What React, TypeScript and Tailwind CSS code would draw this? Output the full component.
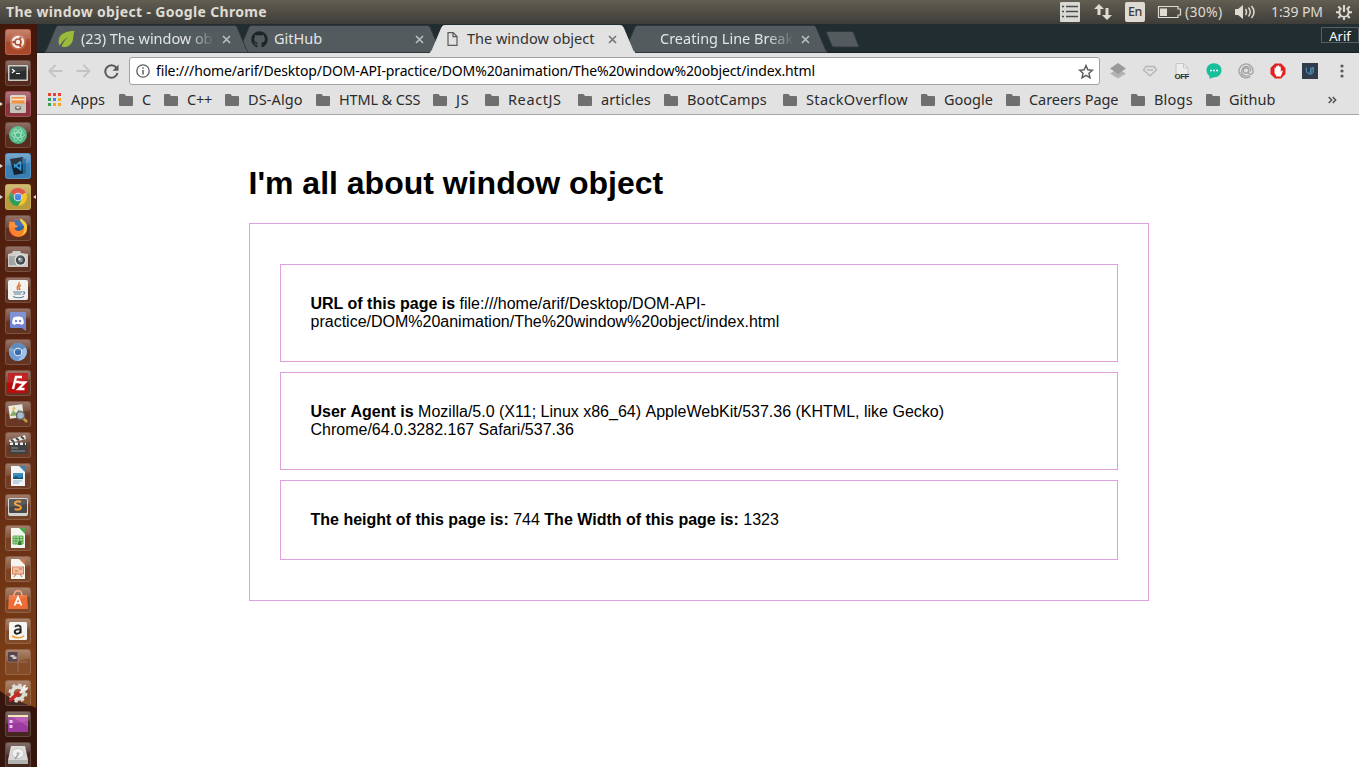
import React from "react";
import { FaGithub } from "react-icons/fa";

const tile = "relative h-[26px] w-[26px] shrink-0 rounded-[3px] overflow-hidden border border-white/15";

type LauncherItem = { bg: string; art: React.ReactNode; running?: boolean; focused?: boolean };

const glass = "bg-white/8";

const launcher: LauncherItem[] = [
  {
    bg: "bg-[#a8482a]",
    art: (
      <>
        <circle cx="13" cy="13" r="8" fill="#d0795a" opacity=".6" />
        <circle cx="13" cy="13" r="6.2" fill="#f4ece8" />
        <circle cx="13" cy="13" r="3" fill="none" stroke="#a8482a" strokeWidth="1.6" />
        <circle cx="8.4" cy="13" r="1.2" fill="#a8482a" />
        <circle cx="15.4" cy="9" r="1.2" fill="#a8482a" />
        <circle cx="15.4" cy="17" r="1.2" fill="#a8482a" />
      </>
    ),
  },
  {
    bg: glass,
    art: (
      <>
        <rect x="3" y="5" width="20" height="16" rx="1" fill="#c9c9c6" />
        <rect x="4.5" y="6.5" width="17" height="13" fill="#2a2e2e" />
        <path d="M7 9l2.5 2L7 13M11 13.5h4" stroke="#fff" strokeWidth="1.2" fill="none" />
      </>
    ),
  },
  {
    bg: "bg-[#8c3340]",
    running: true,
    art: (
      <>
        <rect x="5" y="4" width="16" height="9" rx="1.5" fill="#d9d5ce" />
        <rect x="6.500" y="6" width="13" height="8" fill="#f08a35" />
        <path d="M6.500 8.500h13" stroke="#fbe3c3" strokeWidth="1.500" />
        <rect x="5" y="12.500" width="16" height="9.500" rx="1" fill="#c7c3bb" />
        <ellipse cx="13" cy="17" rx="3.200" ry="2.200" fill="#77736c" />
        <ellipse cx="13" cy="16.600" rx="1.800" ry="1" fill="#e5e2dc" />
      </>
    ),
  },
  {
    bg: glass,
    art: (
      <>
        <circle cx="13" cy="13" r="9" fill="#4fb985" />
        <g fill="none" stroke="#a5e3c5" strokeWidth=".8">
          <ellipse cx="13" cy="13" rx="6.500" ry="2.500" />
          <ellipse cx="13" cy="13" rx="6.500" ry="2.500" transform="rotate(60 13 13)" />
          <ellipse cx="13" cy="13" rx="6.500" ry="2.500" transform="rotate(120 13 13)" />
        </g>
      </>
    ),
  },
  {
    bg: "bg-[#3a80b5]",
    running: true,
    art: (
      <>
        <path d="M5 6l13-2 3 16-12 2z" fill="#15212c" />
        <path d="M17 5l4 1v14l-3 1z" fill="#24679b" />
        <path d="M15.500 8.500v8l-6.500-5M15.500 8.500l-6.500 6" stroke="#2f9be0" strokeWidth="1.700" fill="none" />
      </>
    ),
  },
  {
    bg: "bg-[#b99b3b]",
    running: true,
    focused: true,
    art: (
      <>
        <circle cx="13" cy="13" r="9" fill="#f2c52e" />
        <path d="M13 13L5.200 8.500A9 9 0 0 1 20.800 8.500z" fill="#dc4437" />
        <path d="M13 13L5.200 8.500A9 9 0 0 0 13 22l4-7z" fill="#2c9f5c" />
        <circle cx="13" cy="13" r="4.300" fill="#f4f4f4" />
        <circle cx="13" cy="13" r="3.400" fill="#4a86e8" />
      </>
    ),
  },
  {
    bg: glass,
    art: (
      <>
        <circle cx="13" cy="13" r="9" fill="#f5642a" />
        <circle cx="12.500" cy="11.500" r="7" fill="#2f62a8" />
        <path d="M5 6c-2 4-1.500 10 2 13 4 4 11 3.500 14-1 2-4 1-9-1-11 .5 4-1 7-4 8.500-3 1.200-6 0-6.500-2.500 2 0 3.500-1 3.500-2.200-3-.2-3.500-2.300-3-3.800C8 7 6 7.500 5 6z" fill="#f9852a" />
        <path d="M15 3.500c5 2 8.500 6.500 6.500 12-1 2.500-3 4.500-5 5.500 3-4 3.500-7 2-10.500-1-2.500-4-4-3.500-7z" fill="#fcc92f" />
        <path d="M5 6c-2 6-.5 12 5 15.500C5 21 2.500 14 5 6z" fill="#e7334a" />
      </>
    ),
  },
  {
    bg: glass,
    art: (
      <>
        <path d="M3 8l4-1 1-2h7l1 2 7 1v13H3z" fill="#c9c9c7" />
        <rect x="4" y="10" width="7" height="9" fill="#a3a3a0" />
        <circle cx="15.500" cy="14" r="6" fill="#e1e1df" />
        <circle cx="15.500" cy="14" r="4.700" fill="#44494c" />
        <circle cx="15.500" cy="14" r="2.400" fill="#8a9499" />
        <circle cx="14.500" cy="13" r="1" fill="#fff" />
      </>
    ),
  },
  {
    bg: glass,
    art: (
      <>
        <rect x="3" y="3" width="20" height="20" rx="2" fill="#f1f1f0" />
        <path d="M14 5c2 3-4 4-1 8M16 8c-3 2-2 3-1 5" stroke="#e0702f" strokeWidth="1.600" fill="none" />
        <path d="M8 15h9M9 17h7M8 19.500c3 1.400 8 1.400 11 0M17.500 15c3-1 3 2 0 2.500" stroke="#597f9c" strokeWidth="1.100" fill="none" />
      </>
    ),
  },
  {
    bg: glass,
    art: (
      <>
        <path d="M6 4h14q1 0 1 1v18l-4-3H6q-1 0-1-1V5q0-1 1-1z" fill="#7285d2" />
        <path d="M8.500 9.500q4.500-2 9 0 1.500 3 1.300 6-1.500 1.300-3 1.200l-.8-1q-2 .5-4 0l-.8 1q-1.500.1-3-1.200-.2-3 1.300-6z" fill="#fff" />
        <circle cx="11" cy="13" r="1.200" fill="#7285d2" />
        <circle cx="15" cy="13" r="1.200" fill="#7285d2" />
      </>
    ),
  },
  {
    bg: glass,
    art: (
      <>
        <circle cx="13" cy="13" r="9" fill="#9cc1ea" />
        <path d="M13 13L5.200 8.500A9 9 0 0 1 20.800 8.500z" fill="#4f7fb4" />
        <path d="M13 13L5.200 8.500A9 9 0 0 0 13 22l4-7z" fill="#6b9bd0" />
        <circle cx="13" cy="13" r="4.200" fill="#e6f0fa" />
        <circle cx="13" cy="13" r="3.200" fill="#386ca8" />
      </>
    ),
  },
  {
    bg: glass,
    art: (
      <>
        <rect x="3" y="3" width="20" height="20" fill="#b90d0d" />
        <path d="M8 19l3-12h6M9.500 12h5M14 12.500h6l-6.500 6.500h6" stroke="#fff" strokeWidth="2.400" fill="none" />
      </>
    ),
  },
  {
    bg: glass,
    art: (
      <>
        <rect x="4" y="4" width="14" height="13" fill="#e8e8df" transform="rotate(-7 11 10)" />
        <path d="M5 15l3-6 3 3 3-4 3 6z" fill="#82a85b" />
        <circle cx="9" cy="7.500" r="1.500" fill="#e5b64b" />
        <path d="M18 17l4 4" stroke="#c39a3d" strokeWidth="2.500" />
        <circle cx="15.500" cy="14.500" r="4" fill="#a9bccb" stroke="#5b6369" strokeWidth="1.400" />
      </>
    ),
  },
  {
    bg: glass,
    art: (
      <>
        <path d="M4 8l16-5 1 4-16 4z" fill="#ecebea" />
        <path d="M6 7.500l3 2.500M11 6l3 2.500M16 4.500l3 2.500" stroke="#333" strokeWidth="2" />
        <rect x="4" y="10" width="18" height="12" rx="1" fill="#3f4142" />
        <path d="M5 11.800h16" stroke="#ecebea" strokeWidth="2.500" strokeDasharray="3 2" />
        <path d="M6 16h7M6 19h14" stroke="#9a9c9d" strokeWidth=".9" />
      </>
    ),
  },
  {
    bg: glass,
    art: (
      <>
        <path d="M6 3h9l5 5v15H6z" fill="#f0f4f5" />
        <path d="M14 3h6v6z" fill="#2d74a8" />
        <rect x="8" y="10" width="10" height="6" fill="#2f84b8" />
        <path d="M8 15l3-2 3 2 4-1v2H8z" fill="#195078" />
        <path d="M8 18h9M8 20h6" stroke="#8cb2ca" />
      </>
    ),
  },
  {
    bg: glass,
    art: (
      <>
        <rect x="3" y="4" width="20" height="18" rx="2" fill="#d2d2d0" />
        <rect x="4" y="5" width="18" height="14" rx="1" fill="#484848" />
        <path d="M16 8c-2-1-6-1-6 1.500 0 2.300 6 1.500 6 4 0 2.300-4 2.500-6.300 1.300" stroke="#f79a2e" strokeWidth="2" fill="none" />
      </>
    ),
  },
  {
    bg: glass,
    art: (
      <>
        <path d="M6 3h9l5 5v15H6z" fill="#f2f5ef" />
        <path d="M14 3h6v6z" fill="#36a136" />
        <path d="M8 11h10v8H8zM8 13.500h10M8 16h10M11 11v8M14.500 11v8" fill="#a8d99b" stroke="#49a343" strokeWidth=".9" />
        <path d="M13 20v-3h1.500v-1h2v4z" fill="#35782f" />
      </>
    ),
  },
  {
    bg: glass,
    art: (
      <>
        <path d="M6 3h9l5 5v15H6z" fill="#f7f3ef" />
        <path d="M14 3h6v6z" fill="#bd6a43" />
        <rect x="7.500" y="11" width="11" height="7" fill="#f3c2a4" stroke="#d07f57" />
        <path d="M11 18l-2 3M15 18l2 3M10 15h3M14 13h3" stroke="#c36942" />
      </>
    ),
  },
  {
    bg: glass,
    art: (
      <>
        <path d="M4 8h18l1 14H3z" fill="#ee6d35" />
        <path d="M9 9c0-7 8-7 8 0" stroke="#f7a27a" strokeWidth="1.500" fill="none" />
        <path d="M9.500 18.500L13 10l3.500 8.500M10.500 16h5" stroke="#fff" strokeWidth="1.700" fill="none" />
      </>
    ),
  },
  {
    bg: glass,
    art: (
      <>
        <rect x="4" y="4" width="18" height="18" rx="1.500" fill="#f5f5f4" />
        <path d="M10 8.800c2-2.200 5.600-1.500 5.600 1v5.500M15.500 11.500c-3-.4-5.800.2-5.800 2.300 0 2.500 4.600 2.600 5.800-.3" stroke="#171717" strokeWidth="1.900" fill="none" />
        <path d="M7 18c4 2.500 9 2.500 12-.3" stroke="#f49b28" strokeWidth="1.500" fill="none" />
      </>
    ),
  },
  {
    bg: glass,
    art: (
      <>
        <rect x="3" y="3" width="10" height="10" fill="#453037" />
        <path d="M13 3v20M3 13h20" stroke="#9c7a68" strokeWidth=".8" />
        <path d="M5.500 6h4v1.500h2V10h-4V8h-2z" fill="#c8c3c5" />
      </>
    ),
  },
  {
    bg: glass,
    art: (
      <>
        <circle cx="13" cy="13" r="6" fill="none" stroke="#dcdcd9" strokeWidth="3.500" />
        <circle cx="13" cy="13" r="8.500" fill="none" stroke="#dcdcd9" strokeWidth="2" strokeDasharray="3.500 3.200" />
        <path d="M5.500 20l9-8" stroke="#ce2626" strokeWidth="3.500" strokeLinecap="round" />
        <path d="M14 12l4-3c-1-3 1-5 3-4l-1 3 3-1c0 3-2 4-4 3l-3 4z" fill="#f1f1f0" />
      </>
    ),
  },
  {
    bg: glass,
    art: (
      <>
        <rect x="3" y="4" width="20" height="17" fill="#9b3a9f" />
        <path d="M8 6h15v10z" fill="#c35cc2" opacity=".6" />
        <rect x="3" y="4" width="20" height="2" fill="#f1e7b6" />
        <rect x="4.500" y="9" width="3" height="3" fill="#e6c4e7" />
        <rect x="4.500" y="14" width="3" height="3" fill="#e6c4e7" />
      </>
    ),
  },
  {
    bg: glass,
    art: (
      <>
        <path d="M6 4h14l3 14v4H3v-4z" fill="#d7d7d5" />
        <path d="M3 18h20v4H3z" fill="#b2b3b1" />
        <ellipse cx="13" cy="11.500" rx="6" ry="5" fill="#efefee" stroke="#bfc0bf" />
        <circle cx="13" cy="11.500" r="1.600" fill="#b2b4b3" />
        <path d="M10 17l3-4" stroke="#9c9e9d" strokeWidth="1.300" />
      </>
    ),
  },
];

function Launcher() {
  return (
    <aside className="relative flex w-[37px] shrink-0 flex-col gap-[5px] overflow-hidden border-r border-[#3d160b] bg-linear-to-b from-[#43180b] via-[#5a2410] via-50% to-[#854618] pl-[5px] pt-[5px]">
      <svg className="absolute bottom-0 left-0" width="37" height="80" viewBox="0 0 37 80">
        <path d="M0 4L12 12L37 21V80H0z" fill="#36150e" />
      </svg>
      {launcher.map((item, i) => (
        <div key={i} className="relative h-[26px] shrink-0">
          {item.running && (
            <span className="absolute -left-[5px] top-[11px] h-0 w-0 border-y-2 border-l-[3px] border-y-transparent border-l-[#ded5d0]" />
          )}
          {item.focused && (
            <span className="absolute right-0 top-[11px] h-0 w-0 border-y-2 border-r-[3px] border-y-transparent border-r-[#ded5d0]" />
          )}
          <div className={`${tile} ${item.bg}`}>
            <div className="absolute inset-0 bg-linear-to-b from-white/25 to-transparent to-50%" />
            <svg className="absolute -left-px -top-px" width="26" height="26" viewBox="0 0 26 26">
              {item.art}
              <path d="M0 0h26v9Q13 13 0 13z" fill="#fff" opacity=".1" />
            </svg>
          </div>
        </div>
      ))}
    </aside>
  );
}

function MenuBar() {
  return (
    <header className="flex h-6 shrink-0 items-center bg-linear-to-b from-[#625e52] to-[#3e3d39] pl-[6px] pr-[7px] font-['Noto_Sans',sans-serif] text-[14px] text-[#dfdbd2]">
      <h2 className="flex-1 whitespace-nowrap pb-[2px] text-[14px] font-bold tracking-[0.33px]">The window object - Google Chrome</h2>
      <svg width="20" height="20" viewBox="0 0 20 20" className="mr-[14px]">
        <rect width="20" height="20" rx="1" fill="#d8d8d5" />
        <path d="M2 4.500h2M6 4.500h12M2 9.500h2M6 9.500h12M2 14.500h2M6 14.500h12" stroke="#4b4b49" strokeWidth="1.500" />
      </svg>
      <svg width="18" height="16" viewBox="0 0 18 16" className="mr-[13px]" fill="#dfdbd2">
        <path d="M5 0l5 5H6.500v6h-3V5H0zM13 16l-5-5h3.500V4h3v7H18z" />
      </svg>
      <span className="mr-[12px] flex h-5 w-5 items-center justify-center rounded-[2px] bg-[#dfdbd2] text-[12.500px] font-medium tracking-[-0.3px] text-[#3f3d38]">En</span>
      <svg width="25" height="14" viewBox="0 0 25 14" className="mr-[3px]">
        <path d="M1.500 1.500h19.500v2.500h2.500v6h-2.500v2.500H1.500z" fill="none" stroke="#dfdbd2" strokeWidth="1.200" />
        <rect x="3" y="3.500" width="7" height="7.500" fill="#dfdbd2" />
      </svg>
      <span className="w-[50px] whitespace-nowrap pb-[2px] tracking-[0.3px]">(30%)</span>
      <svg width="21" height="16" viewBox="0 0 21 16" className="mr-[15px]">
        <path d="M0 5h3l5-4v14l-5-4H0z" fill="#dfdbd2" />
        <path d="M10.500 5q2 3 0 6M13.500 3.500q3.500 4.500 0 9M16.500 2q5 6 0 12" fill="none" stroke="#dfdbd2" strokeWidth="1.500" />
      </svg>
      <span className="w-[65px] whitespace-nowrap pb-[2px] text-[14px] tracking-[-0.1px]">1:39 PM</span>
      <svg width="16" height="16" viewBox="0 0 16 16" fill="none" stroke="#dfdbd2">
        <path d="M5.500 4.200a4.700 4.700 0 1 0 5 0" strokeWidth="1.900" />
        <path d="M8 1v7" strokeWidth="2" />
        <path d="M0 8.300h3M13 8.300h3M2.300 14l2-2M13.700 14l-2-2M8 13.500V16M2.300 2.500l2 2M13.700 2.500l-2 2" strokeWidth="2" />
      </svg>
    </header>
  );
}

type TabProps = { title: string; icon: React.ReactNode; active?: boolean; layer: string; fade?: string };

function Tab({ title, icon, active, layer, fade = "" }: TabProps) {
  return (
    <div className={`relative h-7 w-[193px] shrink-0 ${layer}`}>
      <svg className="absolute left-0 top-0" width="205" height="28" viewBox="0 0 205 28">
        <path
          d="M0 27.500Q1.500 27 2.500 24.500L11.800 2.500Q12.700.5 14.500 .5H190.500Q192.300.5 193.200 2.500L202.500 24.500Q203.500 27 205 27.500z"
          fill={active ? "#e2e2e2" : "#545b5f"}
          stroke={active ? "#e2e2e2" : "#30373b"}
        />
      </svg>
      <div className="relative flex h-7 items-center pl-[14px]">
        <span className="flex w-[23px] shrink-0 items-center">{icon}</span>
        <span
          className={`w-[134px] whitespace-nowrap pb-[2px] font-['Noto_Sans',sans-serif] text-[14.500px] leading-[26px] ${
            active ? "text-[#333]" : "text-[#e3e4e5]"
          } ${fade}`}
        >
          {title}
        </span>
        <svg width="9" height="9" viewBox="0 0 9 9" className="ml-[7px]">
          <path d="M1 1l7 7M8 1l-7 7" stroke={active ? "#777" : "#b9bcbe"} strokeWidth="1.700" />
        </svg>
      </div>
    </div>
  );
}

function TabStrip() {
  return (
    <div className="flex h-[29px] shrink-0 border-b border-[#171d21] bg-[#222d32] pl-[7px] pt-px">
      <Tab
        layer="z-10"
        fade="mask-r-from-80% mask-r-to-100% tracking-[-0.05px]"
        title="(23) The window ob"
        icon={
          <svg width="17" height="18" viewBox="0 0 17 18">
            <path d="M16.500 1C10 .8 2 3 .8 9.500c-.5 3 .2 4.800 1 6C3 14 5 10 10 7 7 10 5 13 3.500 16.500 9 18.500 14 15 15 9.500 15.500 6.500 15.500 3.500 16.500 1z" fill="#9aba39" />
          </svg>
        }
      />
      <Tab layer="z-0" title="GitHub" icon={<FaGithub size={17} color="#1f2427" />} />
      <Tab
        layer="z-20"
        active
        title="The window object"
        icon={
          <svg width="16" height="14" viewBox="0 0 16 14" fill="none" stroke="#5b5b5b" strokeWidth="1.200">
            <path d="M4 .7h5.200L13 4.500v8.800H4zM9 .7v4h4" />
          </svg>
        }
      />
      <Tab layer="z-0" fade="mask-r-from-80% mask-r-to-100%" title="Creating Line Break" icon={null} />
      <svg width="34" height="17" viewBox="0 0 34 17" className="ml-[9px] mt-[6px]">
        <path d="M2.500.5H26.500q1.500 0 2.200 1.500l4.800 12.500q.5 1.500-1 1.500H9q-1.500 0-2.200-1.500L1.500 2Q1 .5 2.500 .5z" fill="#545b5f" stroke="#30373b" />
      </svg>
      <div className="flex-1" />
      <div className="mt-[2px] flex h-[16px] w-[38px] items-center justify-center border border-[#566066] pt-px font-['Noto_Sans',sans-serif] text-[13px] leading-[14px] text-white">Arif</div>
    </div>
  );
}

function Toolbar() {
  return (
    <div className="relative flex h-9 shrink-0 items-center bg-[#e2e2e2] pl-[11px] pr-[10px]">
      <svg width="15" height="14" viewBox="0 0 15 14" fill="none" stroke="#c4c4c4" strokeWidth="1.900">
        <path d="M14.500 7H1.500M7.500 1L1.500 7l6 6" />
      </svg>
      <svg width="15" height="14" viewBox="0 0 15 14" fill="none" stroke="#c4c4c4" strokeWidth="1.900" className="ml-[13px]">
        <path d="M.5 7h13M7.500 1l6 6-6 6" />
      </svg>
      <svg width="15" height="15" viewBox="0 0 15 15" className="ml-[13px]">
        <path d="M12.300 3.600A6.200 6.200 0 1 0 13.500 9" fill="none" stroke="#595959" strokeWidth="2" />
        <path d="M14.500.5v6.200H8.500z" fill="#595959" />
      </svg>
      <div className="ml-[10px] flex h-7 w-[971px] items-center rounded-[3px] border border-[#a2a2a2] bg-white pl-[6px] pr-[5px]">
        <svg width="14" height="14" viewBox="0 0 14 14" fill="none" stroke="#5c5c5c">
          <circle cx="7" cy="7" r="6.200" strokeWidth="1.300" />
          <path d="M7 6v4.500M7 3.200v1.600" strokeWidth="1.500" />
        </svg>
        <span className="ml-[6px] flex-1 whitespace-nowrap pb-px font-['Noto_Sans',sans-serif] text-[14px] tracking-[-0.14px] text-black">
          file:///home/arif/Desktop/DOM-API-practice/DOM%20animation/The%20window%20object/index.html
        </span>
        <svg width="16" height="15" viewBox="0 0 16 15" fill="none" stroke="#5a5a5a" strokeWidth="1.400">
          <path d="M8 1.500l1.800 4.300 4.700.4-3.600 3 1.100 4.600L8 11.300l-4 2.500 1.100-4.600-3.600-3 4.700-.4z" />
        </svg>
      </div>
      <div className="ml-[10px] flex items-center gap-4">
        <svg width="16" height="16" viewBox="0 0 16 16">
          <path d="M8 6l8 4.500L8 15.500 0 10.500z" fill="#b3b3b3" />
          <path d="M8 0l8 5.500L8 11 0 5.500z" fill="#999" />
        </svg>
        <svg width="16" height="16" viewBox="0 0 16 16" fill="none" stroke="#b5b5b5" strokeWidth="1.300">
          <path d="M4 3.500h8l2.500 3.500L8 12.800 1.500 7zM5 7h6" />
        </svg>
        <svg width="16" height="16" viewBox="0 0 16 16">
          <path d="M2 .5h7.500L14 5v9H2z" fill="#ececec" stroke="#c6c6c6" />
          <path d="M9.500.5V5H14" fill="none" stroke="#c6c6c6" />
          <text x="8" y="15.500" textAnchor="middle" fontFamily="Liberation Sans, sans-serif" fontWeight="700" fontSize="8" textLength="15" fill="#2f2f2f">OFF</text>
        </svg>
        <svg width="16" height="16" viewBox="0 0 16 16">
          <path d="M8 .3c4.500 0 7.500 3 7.500 7s-3 7-7 7c-2 0-3 1.400-5.500 1.200.8-.8.700-2 .2-2.700C1.300 11.300.5 9.500.5 7.300.5 3.300 3.500.3 8 .3z" fill="#18bf9b" />
          <path d="M4 7.500h2M7 7.500h2M10 7.500h2" stroke="#fff" strokeWidth="1.600" />
        </svg>
        <svg width="16" height="16" viewBox="0 0 16 16" fill="none" stroke="#a2a2a2" strokeWidth="1.300">
          <path d="M12.500 13.300A7 7 0 1 1 15 8.500c0 2-1.500 3-3 2.800-1.500-.3-1.600-1.500-1.600-3.300" />
          <circle cx="8" cy="7.500" r="2.700" />
          <path d="M4.500 12.500C2.500 9 4 3.500 8.500 3.500c3 0 4.500 2 4 5M3 9c1 3.500 5 5 8.500 3.500" />
        </svg>
        <svg width="16" height="16" viewBox="0 0 16 16">
          <path d="M5 .5h6L15.500 5v6L11 15.500H5L.5 11V5z" fill="#e3201f" />
          <path d="M4.500 10V5q.7-.9 1.500 0V3.500q.8-.9 1.600 0V2.800q.8-.9 1.600 0v1q.9-.8 1.600.2V9l1-1.500q1.200-.2.900.9L10.800 13.500H6.500z" fill="#fff" />
        </svg>
        <svg width="16" height="16" viewBox="0 0 16 16">
          <rect width="16" height="16" fill="#303c4b" />
          <path d="M4.300 4.500V8a2.200 2.200 0 0 0 4.400 0V4.500M6.500 11c3.500 1 5-1 5-3.500v-3M11.500 4.500H10V8c0 1.500-.8 2.500-2 3" fill="none" stroke="#4f93be" strokeWidth="1" />
        </svg>
        <svg width="4" height="14" viewBox="0 0 4 14" fill="#5a5a5a" className="ml-[6px]">
          <circle cx="2" cy="2" r="1.600" />
          <circle cx="2" cy="7" r="1.600" />
          <circle cx="2" cy="12" r="1.600" />
        </svg>
      </div>
    </div>
  );
}

const folders = [
  { label: "C", width: "w-[45px]" },
  { label: "C++", width: "w-[61px] tracking-[-0.2px]" },
  { label: "DS-Algo", width: "w-[91px] tracking-[0.1px]" },
  { label: "HTML & CSS", width: "w-[117px] tracking-[-0.15px]" },
  { label: "JS", width: "w-[52px] tracking-[0.8px]" },
  { label: "ReactJS", width: "w-[93px] tracking-[0.6px]" },
  { label: "articles", width: "w-[86px] tracking-[0.1px]" },
  { label: "BootCamps", width: "w-[119px] tracking-[0.1px]" },
  { label: "StackOverflow", width: "w-[138px] tracking-[0.35px]" },
  { label: "Google", width: "w-[85px]" },
  { label: "Careers Page", width: "w-[125px] tracking-[-0.05px]" },
  { label: "Blogs", width: "w-[75px] tracking-[0.2px]" },
  { label: "Github", width: "w-[122px]" },
];

const appDots = ["bg-[#ea4335]", "bg-[#ea4335]", "bg-[#ea4335]", "bg-[#34a05c]", "bg-[#4285f4]", "bg-[#f5a623]", "bg-[#34a05c]", "bg-[#f5a623]", "bg-[#f5a623]"];

function BookmarksBar() {
  return (
    <nav className="flex h-[26px] shrink-0 items-center border-b border-[#a5a5a5] bg-[#e2e2e2] pb-[4px] pl-[11px] font-['Noto_Sans',sans-serif] text-[14.500px] leading-[18px] text-[#2c2c2c]">
      <div className="flex w-[71px] shrink-0 items-center gap-[10px]">
        <div className="grid grid-cols-3 gap-[2px]">
          {appDots.map((color, i) => (
            <span key={i} className={`h-[3px] w-[3px] ${color}`} />
          ))}
        </div>
        <span className="pb-[2px]">Apps</span>
      </div>
      {folders.map(({ label, width }) => (
        <div key={label} className={`flex shrink-0 items-center gap-[9px] ${width}`}>
          <svg width="14" height="12" viewBox="0 0 14 12" className="shrink-0">
            <path d="M1 0h4.500L7 2h6q1 0 1 1v8q0 1-1 1H1q-1 0-1-1V1q0-1 1-1z" fill="#6f6f6f" />
          </svg>
          <span className="whitespace-nowrap pb-[2px]">{label}</span>
        </div>
      ))}
      <svg width="9" height="8" viewBox="0 0 9 8" fill="none" stroke="#4b4b4b" strokeWidth="1.400" className="shrink-0">
        <path d="M.7 1l3 3-3 3M4.700 1l3 3-3 3" />
      </svg>
    </nav>
  );
}

const card = "border border-[#dda0dd] p-[30px]";

function PageContent() {
  return (
    <main className="flex-1 bg-white pl-[211.5px] pt-[50px] font-['Liberation_Sans',Arial,sans-serif] text-[16px] leading-[18px] text-black">
      <h1 className="h-[37px] text-[32px] font-bold leading-[37px]">I'm all about window object</h1>
      <section className="mt-[21px] flex w-[900px] flex-col gap-[10px] border border-[#dda0dd] px-[30px] py-[40px]">
        <p className={card}>
          <b>URL of this page is</b> file:///home/arif/Desktop/DOM-API-
          <br />
          practice/DOM%20animation/The%20window%20object/index.html
        </p>
        <p className={card}>
          <b>User <span className="inline-block">Agent</span> is</b> Mozilla/5.0 (X11; Linux x86_64){" "}
          <span className="inline-block">AppleWebKit/537.36</span> (KHTML, like Gecko)
          <br />
          Chrome/64.0.3282.167 Safari/537.36
        </p>
        <p className={card}>
          <b>The height of this page is:</b> 744 <b>The Width of this page is:</b> 1323
        </p>
      </section>
    </main>
  );
}

export default function App() {
  return (
    <div className="flex h-[767px] w-[1359px] flex-col overflow-hidden">
      <MenuBar />
      <div className="flex min-h-0 flex-1">
        <Launcher />
        <div className="flex min-w-0 flex-1 flex-col">
          <TabStrip />
          <Toolbar />
          <BookmarksBar />
          <PageContent />
        </div>
      </div>
    </div>
  );
}
